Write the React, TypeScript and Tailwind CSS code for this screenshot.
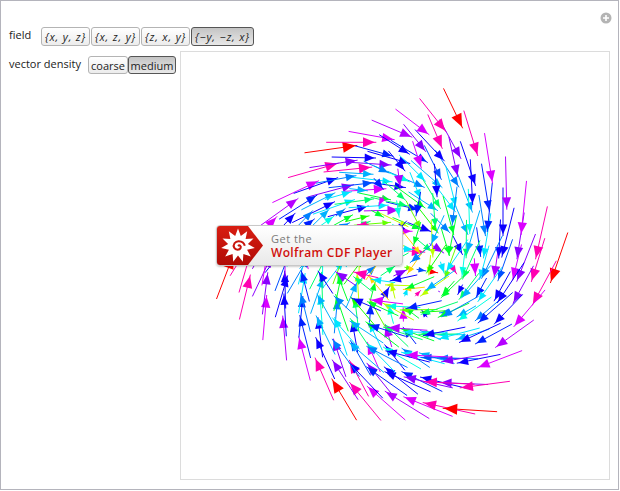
import React from "react";

type V3 = [number, number, number];
const corners: Record<string, [number, number]> = {
  "1,1,1": [453, 108],
  "1,1,-1": [331, 149],
  "1,-1,-1": [225, 277],
  "-1,-1,-1": [344, 399],
  "-1,-1,1": [470, 410],
  "-1,1,1": [559, 258],
  "1,-1,1": [345, 248],
  "-1,1,-1": [433, 272],
};
const PX = 180;
const PY = 51;

function project(p: V3): [number, number] {
  let sx = 0;
  let sy = 0;
  for (const a of [1, -1])
    for (const b of [1, -1])
      for (const c of [1, -1]) {
        const w = ((1 + a * p[0]) * (1 + b * p[1]) * (1 + c * p[2])) / 8;
        const s = corners[`${a},${b},${c}`];
        sx += w * s[0];
        sy += w * s[1];
      }
  return [sx - PX, sy - PY];
}

function buildArrows() {
  const out: { d: number; color: string; line: string; head: string }[] = [];
  const n = 7;
  for (let i = 0; i < n; i++)
    for (let j = 0; j < n; j++)
      for (let k = 0; k < n; k++) {
        const x = -1 + (2 * i) / (n - 1);
        const y = -1 + (2 * j) / (n - 1);
        const z = -1 + (2 * k) / (n - 1);
        const r = Math.sqrt(x * x + y * y + z * z);
        if (r < 0.01) continue;
        const t = r / Math.sqrt(3);
        const s = (0.32 * Math.sqrt(3) * (0.55 + 0.45 * t)) / r;
        const F: V3 = [-y, -z, x];
        const a = project([x - (s * F[0]) / 2, y - (s * F[1]) / 2, z - (s * F[2]) / 2]);
        const b = project([x + (s * F[0]) / 2, y + (s * F[1]) / 2, z + (s * F[2]) / 2]);
        const dx = b[0] - a[0];
        const dy = b[1] - a[1];
        const len = Math.hypot(dx, dy) || 1;
        const ux = dx / len;
        const uy = dy / len;
        const depth = (x - y + z + 3) / 6;
        const hl = Math.min(6.5 + 6.5 * t * t, len * 0.7);
        const hw = hl * 0.42;
        const tx = b[0] - ux * Math.min(1.5, len * 0.1);
        const ty = b[1] - uy * Math.min(1.5, len * 0.1);
        const bx = tx - ux * hl;
        const by = ty - uy * hl;
        const hue = Math.pow(t, 1.2) * 360;
        out.push({
          d: depth,
          color: `hsl(${hue.toFixed(1)},100%,50%)`,
          line: `M${a[0].toFixed(1)} ${a[1].toFixed(1)}L${b[0].toFixed(1)} ${b[1].toFixed(1)}`,
          head: `${tx.toFixed(1)},${ty.toFixed(1)} ${(bx - uy * hw).toFixed(1)},${(by + ux * hw).toFixed(1)} ${(bx + uy * hw).toFixed(1)},${(by - ux * hw).toFixed(1)}`,
        });
      }
  return out.sort((p, q) => p.d - q.d);
}
const arrows = buildArrows();

function starPoints() {
  const pts: string[] = [];
  const c = 18;
  const m = 11;
  for (let i = 0; i < m * 2; i++) {
    const ang = (Math.PI * i) / m - Math.PI / 2;
    const rad = i % 2 === 0 ? 17 : 10;
    pts.push(`${(c + rad * Math.cos(ang)).toFixed(1)},${(c + rad * Math.sin(ang)).toFixed(1)}`);
  }
  return pts.join(" ");
}

function Btn({ children, active, className }: { children: React.ReactNode; active?: boolean; className: string }) {
  return (
    <div
      className={`flex items-center justify-center rounded-[3px] border text-[11px] leading-none text-[#222] ${
        active
          ? "border-[#555] bg-gradient-to-b from-[#c4c4c4] to-[#e8e8e8]"
          : "border-[#b4b4b4] bg-gradient-to-b from-[#ffffff] to-[#ececec]"
      } ${className}`}
    >
      {children}
    </div>
  );
}

export default function App() {
  return (
    <div className="relative ml-0 flex h-[490px] w-[619px] flex-col border border-[#b4b4bc] bg-white pl-2 pr-2 pt-[26px] font-['Open_Sans',sans-serif] text-[11px] text-[#222]">
      <svg className="absolute right-[6px] top-[11px]" width="12" height="12" viewBox="0 0 12 12">
        <circle cx="6" cy="6" r="5.5" fill="#b4b4b4" />
        <path d="M6 3V9M3 6H9" stroke="#fff" strokeWidth="1.6" />
      </svg>

      <div className="flex h-[19px] items-center">
        <span className="mb-[2px] w-[32px]">field</span>
        <div className="flex gap-px italic tracking-[0.8px]">
          <Btn className="h-[19px] w-[49px]">{"{x, y, z}"}</Btn>
          <Btn className="h-[19px] w-[49px]">{"{x, z, y}"}</Btn>
          <Btn className="h-[19px] w-[49px]">{"{z, x, y}"}</Btn>
          <Btn active className="h-[19px] w-[63px]">{"{−y, −z, x}"}</Btn>
        </div>
      </div>

      <div className="mt-[5px] flex">
        <div className="flex h-[24px] w-[171px] shrink-0 items-start">
          <span className="mt-[5px] w-[79px] whitespace-nowrap">vector density</span>
          <div className="mt-[5px] flex">
            <Btn className="h-[18px] w-[40px]">coarse</Btn>
            <Btn active className="h-[18px] w-[48px]">medium</Btn>
          </div>
        </div>
        <div className="relative h-[429px] w-[430px] border border-[#dcdcdc] bg-white">
          <svg className="absolute left-[-1px] top-[-1px]" width="430" height="429" viewBox="0 0 430 429">
            {arrows.map((a, i) => (
              <g key={i}>
                <path d={a.line} stroke={a.color} strokeWidth="1" fill="none" />
                <polygon points={a.head} fill={a.color} />
              </g>
            ))}
          </svg>

          <div className="absolute left-[35px] top-[173px] flex h-[41px] w-[187px] overflow-hidden rounded-[4px] border border-[#c8c8c8] bg-gradient-to-b from-[#ffffff] to-[#e9e9e9] shadow-[0_1px_2px_rgba(0,0,0,0.2)]">
            <svg className="shrink-0" width="47" height="39" viewBox="0 0 47 39">
              <defs>
                <linearGradient id="cdfred" x1="0" y1="0" x2="0" y2="1">
                  <stop offset="0" stopColor="#d81e12" />
                  <stop offset="1" stopColor="#b00a06" />
                </linearGradient>
              </defs>
              <polygon points="0,0 31,0 46,19.5 31,39 0,39" fill="url(#cdfred)" />
              <g transform="translate(3,1.5)">
                <polygon points={starPoints()} fill="#fff" />
                <path
                  d="M18 18.5c1.5-1.5 3.5 0 2.6 2-1 2.3-5 2.4-6.4-.2-1.6-3 .9-6.8 4.6-6.6 3.6.2 5.6 2.8 6 4.6"
                  stroke="#c8140c"
                  strokeWidth="2"
                  fill="none"
                />
              </g>
            </svg>
            <div className="ml-[7px] flex flex-col justify-center">
              <span className="text-[11px] leading-[13px] tracking-[0.5px] text-[#7a7a7a]">Get the</span>
              <span className="whitespace-nowrap text-[12px] font-semibold leading-[15px] tracking-[0.35px] text-[#d0100c]">
                Wolfram CDF Player
              </span>
            </div>
          </div>
        </div>
      </div>
    </div>
  );
}
